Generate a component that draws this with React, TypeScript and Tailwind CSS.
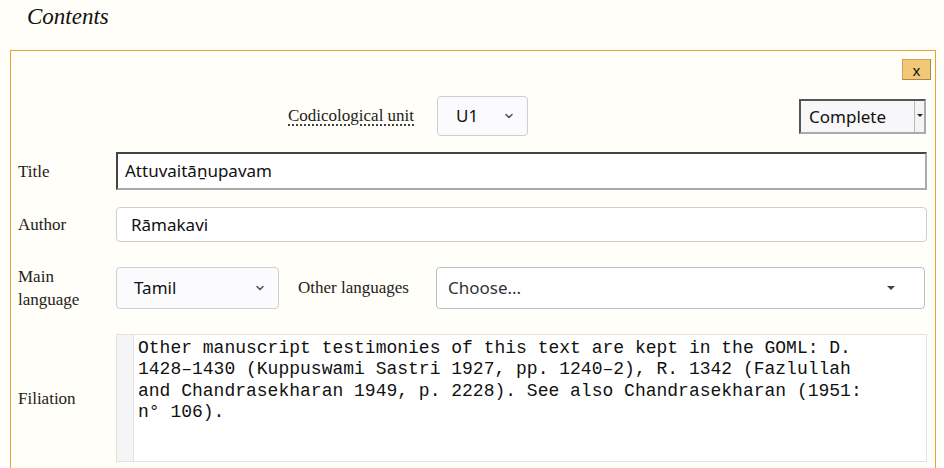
import React from 'react'

const serif = { fontFamily: '"Liberation Serif", "DejaVu Serif", serif' }

// Small chevron used by the custom-styled selects.
const Chevron = () => (
  <svg width="12" height="12" viewBox="0 0 12 12" className="text-gray-600">
    <path d="M3 4.5 L6 7.5 L9 4.5" fill="none" stroke="currentColor" strokeWidth="1.6" strokeLinecap="round" strokeLinejoin="round" />
  </svg>
)

const Label = ({ children }: { children: React.ReactNode }) => (
  <div className="w-[98px] shrink-0 text-[17px] leading-[23px] text-[#222]" style={serif}>
    {children}
  </div>
)

export default function App() {
  return (
    <div className="min-h-[468px] w-[944px] overflow-hidden bg-[#fffef8] text-[#111]" style={{ fontFamily: '"Noto Sans", "Open Sans", sans-serif' }}>
      <h2 className="pl-[27px] pt-[3px] text-[23px] italic leading-[28px] text-[#111]" style={serif}>
        Contents
      </h2>

      <div className="ml-[10px] mt-[19px] w-[926px] border border-[#f0a030] pb-[8px] pl-[7px] pr-[8px]">
        <div className="-mr-[4px] flex justify-end pt-[8px]">
          <button className="h-[21px] w-[29px] border border-[#c9a45a] border-b-[#a8884a] border-r-[#a8884a] bg-[#f2c877] text-[15px] leading-[16px] text-[#111]">
            x
          </button>
        </div>

        <div className="mt-[16px] flex items-center">
          <span className="ml-[270px] text-[17px] text-[#222] underline decoration-dotted underline-offset-[3px]" style={serif}>
            Codicological unit
          </span>
          <div className="ml-[23px] flex h-[40px] w-[91px] items-center justify-between rounded-[4px] border border-[#cfcfcf] bg-[#fbfbfd] pl-[18px] pr-[12px] text-[17px]">
            <span>U1</span>
            <Chevron />
          </div>
          <div className="ml-auto mr-[1px] flex h-[35px] w-[127px] items-stretch border-2 border-[#555] border-b-[#aaa] border-r-[#aaa] bg-[#f7f7f9]">
            <span className="flex-1 pl-[8px] text-[17px] leading-[31px] text-[#111]">Complete</span>
            <span className="flex w-[10px] items-center justify-center border-l border-[#bbb] bg-[#f4f4f4]">
              <svg width="6" height="4" viewBox="0 0 6 4">
                <path d="M0 0 L6 0 L3 3 Z" fill="#222" />
              </svg>
            </span>
          </div>
        </div>

        <div className="mt-[16px] flex items-center">
          <Label>Title</Label>
          <div className="flex h-[38px] flex-1 items-center border-2 border-[#444] border-b-[#aaa] border-r-[#aaa] bg-white pl-[7px] text-[17px]">
            Attuvaitāṉupavam
          </div>
        </div>

        <div className="mt-[17px] flex items-center">
          <Label>Author</Label>
          <div className="flex h-[35px] flex-1 items-center rounded-[4px] border border-[#cfcfcf] bg-white pl-[14px] text-[17px]">
            Rāmakavi
          </div>
        </div>

        <div className="mt-[23px] flex items-center">
          <Label>
            Main
            <br />
            language
          </Label>
          <div className="flex h-[42px] w-[163px] items-center justify-between rounded-[4px] border border-[#cfcfcf] bg-[#fbfbfd] pl-[17px] pr-[12px] text-[17px]">
            <span>Tamil</span>
            <Chevron />
          </div>
          <span className="ml-[19px] text-[17px] text-[#222]" style={serif}>
            Other languages
          </span>
          <div className="ml-[27px] mr-[2px] flex h-[42px] flex-1 items-center justify-between rounded-[4px] border border-[#bdbdbd] bg-white pl-[11px] pr-[29px] text-[17px]">
            <span className="text-[#333]">Choose...</span>
            <svg width="8" height="5" viewBox="0 0 8 5">
              <path d="M0 0 L8 0 L4 4 Z" fill="#444" />
            </svg>
          </div>
        </div>

        <div className="mt-[23px] flex items-center">
          <Label>Filiation</Label>
          <div className="flex h-[128px] flex-1 border border-[#e2e2e2] bg-white">
            <div className="w-[17px] shrink-0 border-r border-[#e2e2e2] bg-[#f5f5f5]" />
            <p className="whitespace-pre pl-[4px] pt-[3px] text-[18px] leading-[21.3px] text-[#111]" style={{ fontFamily: '"Liberation Mono", "DejaVu Sans Mono", monospace' }}>
              {'Other manuscript testimonies of this text are kept in the GOML: D.\n1428–1430 (Kuppuswami Sastri 1927, pp. 1240–2), R. 1342 (Fazlullah\nand Chandrasekharan 1949, p. 2228). See also Chandrasekharan (1951:\nn° 106).'}
            </p>
          </div>
        </div>
      </div>
    </div>
  )
}
